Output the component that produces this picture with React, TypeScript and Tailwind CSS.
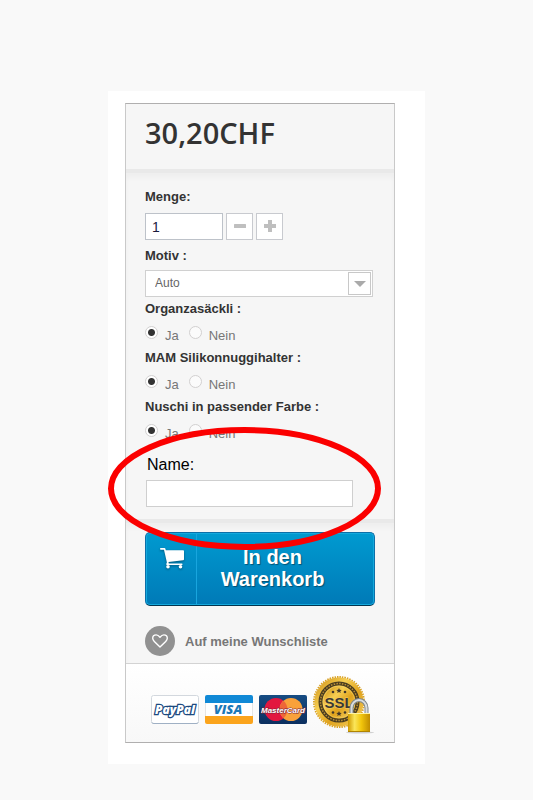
import { useState } from "react";

const options = [
  { id: "organza", label: "Organzasäckli :" },
  { id: "mam", label: "MAM Silikonnuggihalter :" },
  { id: "nuschi", label: "Nuschi in passender Farbe :" },
];

function CartIcon() {
  return (
    <svg viewBox="0 0 24 21" fill="currentColor" className="w-6 h-[21px] drop-shadow-[0_1px_1px_rgba(0,0,0,0.4)]">
      <path d="M0 .8Q0 0 .8 0h3.600q.8 0 1 .8l.4 1.400H23.200q.8 0 .8.8v8.200q0 .9-.9 1L8.500 14l.3 1.500h13q.8 0 .8.800t-.8.800H7q-1 0-.8-1l.7-1.500L4 1.700H.8Q0 1.700 0 .8z" />
      <circle cx="8" cy="18.800" r="1.800" />
      <circle cx="20.500" cy="18.800" r="1.800" />
    </svg>
  );
}

function HeartIcon() {
  return (
    <svg viewBox="0 0 16 14" fill="none" stroke="currentColor" strokeWidth="1.4" strokeLinejoin="round" className="w-4 h-3.5">
      <path d="M8 13 2.300 7.500C1.200 6.400.7 5.400.7 4.300.7 2.200 2 .9 4.200.9 5.900.9 7 2 8 3.200 9 2 10.100.9 11.800.9c2.200 0 3.500 1.300 3.500 3.400 0 1.100-.5 2.100-1.600 3.200z" />
    </svg>
  );
}

function PayPalCard() {
  return (
    <svg viewBox="0 0 48 29" className="w-12 h-[29px]" aria-label="PayPal">
      <rect x="0.500" y="0.500" width="47" height="28" rx="2" fill="#fff" stroke="#d3d8de" />
      <path d="M1 27.500q0 1 2 1h42q2 0 2-1" fill="none" stroke="#9fb0c4" />
      <text
        x="24"
        y="19"
        textAnchor="middle"
        fontFamily="Open Sans, sans-serif"
        fontSize="12"
        fontWeight="800"
        fontStyle="italic"
        fill="#fff"
        stroke="#1d4a7f"
        strokeWidth="2.5"
        paintOrder="stroke"
      >
        PayPal
      </text>
    </svg>
  );
}

function VisaCard() {
  return (
    <svg viewBox="0 0 48 29" className="w-12 h-[29px]" aria-label="Visa">
      <rect width="48" height="29" rx="2" fill="#fff" />
      <path d="M0 8V2q0-2 2-2h44q2 0 2 2v6z" fill="#1089d6" />
      <path d="M0 21v6q0 2 2 2h44q2 0 2-2v-6z" fill="#fba41c" />
      <path d="M0.500 8v13M47.500 8v13" stroke="#e4e4e4" />
      <text
        x="23"
        y="19"
        textAnchor="middle"
        fontFamily="Open Sans, sans-serif"
        fontSize="13"
        fontWeight="800"
        fontStyle="italic"
        fill="#1c78b8"
      >
        VISA
      </text>
    </svg>
  );
}

function MasterCard() {
  return (
    <svg viewBox="0 0 48 29" className="w-12 h-[29px]" aria-label="MasterCard">
      <defs>
        <linearGradient id="mc-bg" x2="0" y2="1">
          <stop stopColor="#164c83" />
          <stop offset="1" stopColor="#0c2f5f" />
        </linearGradient>
      </defs>
      <rect width="48" height="29" rx="2" fill="url(#mc-bg)" />
      <circle cx="17" cy="14.500" r="11.500" fill="#e2173f" />
      <circle cx="32" cy="14.500" r="11.500" fill="#f9a13a" />
      <path d="M24.500 5.800a11.500 11.500 0 0 1 0 17.400 11.500 11.500 0 0 1 0-17.400z" fill="#ee6638" />
      <text
        x="24"
        y="18"
        textAnchor="middle"
        fontFamily="Liberation Sans Narrow, Liberation Sans, sans-serif"
        fontSize="8"
        fontWeight="700"
        fontStyle="italic"
        fill="#fff"
        stroke="#7c2436"
        strokeWidth="1"
        paintOrder="stroke"
      >
        MasterCard
      </text>
    </svg>
  );
}

function SslSeal() {
  return (
    <svg viewBox="0 0 61 58" className="w-[61px] h-[58px]" aria-label="SSL">
      <defs>
        <linearGradient id="gold" x2="1" y2="1">
          <stop stopColor="#c98a10" />
          <stop offset="0.350" stopColor="#f7cf52" />
          <stop offset="0.600" stopColor="#e0a21c" />
          <stop offset="1" stopColor="#f5d367" />
        </linearGradient>
        <linearGradient id="lock" x2="1" y2="0">
          <stop stopColor="#d09a00" />
          <stop offset="0.300" stopColor="#fbe65a" />
          <stop offset="0.600" stopColor="#f2c60c" />
          <stop offset="1" stopColor="#c08c00" />
        </linearGradient>
      </defs>
      <circle cx="26" cy="26" r="25" fill="none" stroke="#d9a227" strokeWidth="2" strokeDasharray="1.500 1" />
      <circle cx="26" cy="26" r="24.500" fill="url(#gold)" />
      <circle cx="26" cy="26" r="18.500" fill="none" stroke="#4a3d20" strokeWidth="4" />
      <circle cx="26" cy="26" r="18.500" fill="none" stroke="#b98f35" strokeWidth="1.500" strokeDasharray="1.500 1.300" />
      <circle cx="26" cy="26" r="16" fill="url(#gold)" stroke="#f6d973" strokeWidth="0.500" />
      <g fill="#40372a">
        <path d="m26 12 .8 1.700 1.900.2-1.400 1.300.4 1.900-1.700-1-1.700 1 .4-1.900-1.400-1.300 1.900-.2z" />
        <path d="m26 35 .8 1.700 1.900.2-1.400 1.300.4 1.900-1.700-1-1.700 1 .4-1.900-1.400-1.300 1.900-.2z" />
        <circle cx="20" cy="16" r="1.300" />
        <circle cx="32" cy="16" r="1.300" />
        <circle cx="20" cy="36.500" r="1.300" />
        <circle cx="32" cy="36.500" r="1.300" />
      </g>
      <text
        x="26"
        y="32"
        textAnchor="middle"
        fontFamily="Liberation Sans Narrow, Liberation Sans, sans-serif"
        fontSize="15"
        fontWeight="700"
        fill="#3c3a35"
        stroke="#f4ce62"
        strokeWidth="1"
        paintOrder="stroke"
      >
        SSL
      </text>
      <ellipse cx="47" cy="56.500" rx="14" ry="1" fill="#d0d0d0" />
      <path d="M38.500 38v-6a7.500 8 0 0 1 15 0v6" fill="none" stroke="#7f868a" strokeWidth="4" />
      <path d="M38.500 38v-6a7.500 8 0 0 1 15 0v6" fill="none" stroke="#d9dddf" strokeWidth="2" />
      <rect x="35" y="37" width="22" height="19" rx="0.500" fill="url(#lock)" />
      <path d="M35 37.500h22" stroke="#fff3a0" />
      <path d="M35 55.500h22" stroke="#b08400" />
    </svg>
  );
}

function RadioRow({ id, label }: { id: string; label: string }) {
  const [value, setValue] = useState("Ja");

  return (
    <fieldset className="h-[49px]">
      <legend className="font-bold text-[#333]">{label}</legend>
      <div className="flex items-start pt-2">
        {["Ja", "Nein"].map((v) => (
          <label key={v} className="flex items-start gap-[7px] mr-2.5">
            <input
              type="radio"
              name={id}
              checked={value === v}
              onChange={() => setValue(v)}
              className="appearance-none w-[13px] h-[13px] rounded-full border border-[#d2d0d0] bg-[#fbfbfb] checked:bg-[radial-gradient(circle,#333_0_3px,#fff_4px)]"
            />
            <span className="leading-5">{v}</span>
          </label>
        ))}
      </div>
    </fieldset>
  );
}

export default function App() {
  const [qty, setQty] = useState(1);

  return (
    <div className="min-h-screen bg-[#f9f9f9] pt-[91px] pb-9 font-['Liberation_Sans',Arial,sans-serif] text-[13px] leading-[18px] text-[#777]">
      <main className="mx-auto w-full max-w-[317px] bg-white pt-3 pl-[17px] pr-[30px] pb-[21px]">
        <form
          className="border border-[#c9c9c9] border-t-[#b0afaf] border-b-[#b0afaf] bg-[#f6f6f6]"
          onSubmit={(e) => e.preventDefault()}
        >
          <div className="h-[65px] px-[19px] pt-[9px]">
            <p className="font-['Open_Sans',sans-serif] text-[29px] leading-10 font-semibold text-[#333]">30,20CHF</p>
          </div>

          <div className="border-t-4 border-[#e9e9e9] px-[19px] pt-[15px] pb-3 shadow-[inset_0_5px_5px_rgba(0,0,0,0.03)]">
            <label htmlFor="qty" className="block font-bold text-[#333]">
              Menge:
            </label>
            <div className="mt-[7px] flex gap-[3px]">
              <input
                id="qty"
                value={qty}
                onChange={(e) => setQty(Number(e.target.value) || 1)}
                className="w-[78px] h-[27px] border border-[#bdc2c9] bg-white px-1.5 text-sm text-[#1a1a3c]"
              />
              <button
                type="button"
                aria-label="Weniger"
                onClick={() => setQty(Math.max(1, qty - 1))}
                className="flex w-[27px] h-[27px] items-center justify-center border border-[#c8cacf] bg-white pb-0.5 text-[#bfbfbf]"
              >
                <svg viewBox="0 0 12 12" className="w-3 h-3" fill="currentColor">
                  <rect y="4" width="12" height="4" rx="0.500" />
                </svg>
              </button>
              <button
                type="button"
                aria-label="Mehr"
                onClick={() => setQty(qty + 1)}
                className="flex w-[27px] h-[27px] items-center justify-center border border-[#c8cacf] bg-white pb-0.5 text-[#bfbfbf]"
              >
                <svg viewBox="0 0 12 12" className="w-3 h-3" fill="currentColor">
                  <path d="M4 0h4v4h4v4H8v4H4V8H0V4h4z" />
                </svg>
              </button>
            </div>

            <label htmlFor="motiv" className="mt-[7px] block font-bold text-[#333]">
              Motiv :
            </label>
            <div className="relative mt-[5px] mb-[3px]">
              <select
                id="motiv"
                className="block w-full h-[27px] max-w-[228px] appearance-none border border-[#d0d0d0] bg-white px-[9px] pb-0.5 text-xs text-[#666]"
              >
                <option>Auto</option>
                <option>Bär</option>
              </select>
              <span className="pointer-events-none absolute top-0.5 left-[203px] flex w-[23px] h-[23px] items-center justify-center border border-[#c8c8c8] bg-white">
                <svg viewBox="0 0 12 6" className="w-3 h-1.5" fill="#aaa">
                  <path d="M0 0h12L6 6z" />
                </svg>
              </span>
            </div>

            {options.map((o) => (
              <RadioRow key={o.id} id={o.id} label={o.label} />
            ))}

            <div className="relative pt-1.5">
              <label htmlFor="name" className="block pl-0.5 text-base leading-6 text-black">
                Name:
              </label>
              <input
                id="name"
                className="mt-[3px] ml-px block w-[207px] h-[27px] border border-[#cfcfcf] bg-white px-1.5 text-[#333]"
              />
              {/* red marker around the name field */}
              <svg
                viewBox="0 0 273 123"
                className="pointer-events-none absolute -top-5 -left-[37px] z-10 w-[273px] h-[123px] max-w-none"
              >
                <ellipse cx="136.500" cy="61.500" rx="133.500" ry="58.500" fill="none" stroke="#fb0000" strokeWidth="6" />
              </svg>
            </div>
          </div>

          <div className="border-t-4 border-[#e9e9e9] px-[19px] pt-[9px] pb-[7px] shadow-[inset_0_5px_5px_rgba(0,0,0,0.03)]">
            <button
              type="submit"
              className="flex w-full h-[74px] rounded-[5px] border border-[#0c6fa8] border-b-[#02354f] bg-linear-to-b from-[#009ad0] to-[#007ab7] text-white shadow-[inset_0_0_0_1px_#14a9dd]"
            >
              <span className="flex h-full w-[51px] justify-center border-r border-[#19a5de] pt-[15px] pl-0.5">
                <CartIcon />
              </span>
              <span className="flex-1 pt-[13px] pl-5 pr-[46px] text-center text-xl leading-[22px] font-bold [text-shadow:1px_1px_1px_rgba(0,0,0,0.4)]">
                In den Warenkorb
              </span>
            </button>

            <a href="#wunschliste" className="mt-5 flex items-center gap-2.5 font-bold text-[#777]">
              <span className="flex w-[30px] h-[30px] items-center justify-center rounded-full bg-[#919191] text-white">
                <HeartIcon />
              </span>
              <span className="pt-0.5">Auf meine Wunschliste</span>
            </a>
          </div>

          <div className="flex h-[79px] items-center gap-1.5 border-t border-[#d3d3d3] bg-linear-to-b from-white to-[#f8f8f8] pt-3 pl-[25px]">
            <PayPalCard />
            <VisaCard />
            <MasterCard />
            <div className="-mt-2">
              <SslSeal />
            </div>
          </div>
        </form>
      </main>
    </div>
  );
}
